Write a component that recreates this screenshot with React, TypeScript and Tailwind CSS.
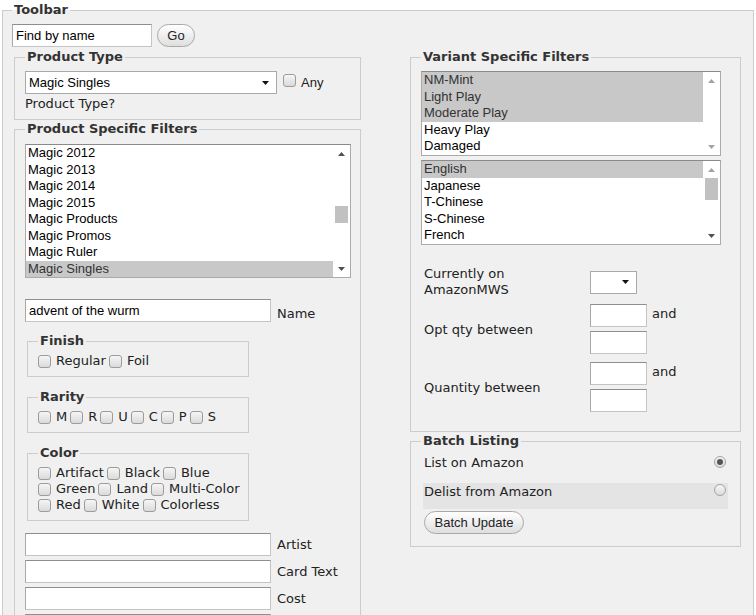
import React from "react";

const fieldsetCls = "border border-[#cccccc] min-w-0";
const legendCls = "px-[2px] font-bold leading-[18px] text-[#333]";
const inputCls =
  "block h-[23px] bg-white border border-[#c4c4c4] border-t-[#8e8e8e] border-l-[#a8a8a8] px-[3px] text-[13px] text-black font-['Liberation_Sans',Arial,sans-serif] outline-none";

function Tri({ up, dim }: { up?: boolean; dim?: boolean }) {
  return (
    <svg width="7" height="4" viewBox="0 0 7 4">
      <path d={up ? "M0 4L3.5 0L7 4Z" : "M0 0L3.5 4L7 0Z"} fill={dim ? "#a3a3a3" : "#505050"} />
    </svg>
  );
}

function Box() {
  return (
    <span className="inline-block w-[13px] h-[13px] shrink-0 rounded-[3px] border border-[#9c9c9c] bg-linear-to-b from-[#f6f6f6] to-[#dadada]" />
  );
}

function Radio({ checked }: { checked?: boolean }) {
  return (
    <span className="flex w-[12px] h-[12px] shrink-0 items-center justify-center rounded-full border border-[#a3a3a3] bg-linear-to-b from-[#f6f6f6] to-[#dcdcdc]">
      {checked ? <span className="w-[6px] h-[6px] rounded-full bg-[#555]" /> : null}
    </span>
  );
}

function Checks({ labels }: { labels: string[] }) {
  return (
    <div className="flex items-center h-[16px] leading-[16px] whitespace-nowrap">
      {labels.map((l, i) => (
        <span key={l} className={i === 0 ? "flex shrink-0 items-center" : "flex shrink-0 items-center ml-[3px]"}>
          <Box />
          <span className="ml-[5px]">{l}</span>
        </span>
      ))}
    </div>
  );
}

function FakeSelect({ className, value }: { className: string; value?: string }) {
  return (
    <div
      className={`flex items-center justify-between h-[23px] bg-white border border-[#a9a9a9] pl-[3px] pr-[7px] text-[13px] text-black font-['Liberation_Sans',Arial,sans-serif] ${className}`}
    >
      <span>{value}</span>
      <svg width="7" height="4" viewBox="0 0 7 4">
        <path d="M0 0L3.5 4L7 0Z" fill="#111" />
      </svg>
    </div>
  );
}

type ListProps = {
  items: string[];
  selected: number[];
  boxCls: string;
  rowCls: string;
  thumbCls?: string;
  upDim?: boolean;
  downDim?: boolean;
};

function ListBox({ items, selected, boxCls, rowCls, thumbCls, upDim, downDim }: ListProps) {
  return (
    <div
      className={`flex bg-white border border-[#ababab] border-t-[#8a8a8a] overflow-hidden text-[13px] font-['Liberation_Sans',Arial,sans-serif] ${boxCls}`}
    >
      <div className="flex-1 min-w-0">
        {items.map((it, i) => (
          <div
            key={it}
            className={`${rowCls} pl-[2px] ${selected.includes(i) ? "bg-[#c8c8c8] text-[#333]" : "text-black"}`}
          >
            {it}
          </div>
        ))}
      </div>
      <div className="flex w-[17px] shrink-0 flex-col bg-white">
        <div className="flex h-[17px] items-center justify-center">
          <Tri up dim={upDim} />
        </div>
        <div className="flex-1">{thumbCls ? <div className={`mx-[2px] bg-[#c1c1c1] ${thumbCls}`} /> : null}</div>
        <div className="flex h-[17px] items-center justify-center">
          <Tri dim={downDim} />
        </div>
      </div>
    </div>
  );
}

function LabeledInput({ label, top }: { label?: string; top: string }) {
  return (
    <div className={`flex items-center ${top}`}>
      <input className={`${inputCls} w-[246px]`} defaultValue="" />
      {label ? <span className="ml-[6px] leading-[16px]">{label}</span> : null}
    </div>
  );
}

const products = [
  "Magic 2012",
  "Magic 2013",
  "Magic 2014",
  "Magic 2015",
  "Magic Products",
  "Magic Promos",
  "Magic Ruler",
  "Magic Singles",
];
const conditions = ["NM-Mint", "Light Play", "Moderate Play", "Heavy Play", "Damaged"];
const languages = ["English", "Japanese", "T-Chinese", "S-Chinese", "French"];

export default function App() {
  return (
    <div className="min-h-[615px] bg-white text-[13px] text-[#222] font-['DejaVu_Sans',Verdana,sans-serif]">
      <fieldset className={`${fieldsetCls} mx-[2px] mt-[1px] bg-[#f0f0f0] px-[9px] pt-[5px] pb-[40px]`}>
        <legend className={legendCls}>Toolbar</legend>

        {/* search */}
        <div className="flex items-center">
          <input className={`${inputCls} w-[140px]`} defaultValue="Find by name" />
          <button className="ml-[5px] h-[23px] w-[38px] rounded-full border border-[#a9a9a9] bg-linear-to-b from-white to-[#dedede] text-[13px] text-[#222] font-['Liberation_Sans',Arial,sans-serif]">
            Go
          </button>
        </div>

        <div className="mt-[1px] flex items-start">
          {/* left column */}
          <div className="ml-[2px] w-[347px] shrink-0">
            <fieldset className={`${fieldsetCls} px-[10px] pt-[5px] pb-[7px]`}>
              <legend className={legendCls}>Product Type</legend>
              <div className="flex items-center">
                <FakeSelect className="w-[252px]" value="Magic Singles" />
                <span className="ml-[6px]">
                  <Box />
                </span>
                <span className="ml-[5px] font-['Liberation_Sans',Arial,sans-serif]">Any</span>
              </div>
              <div className="mt-[2px] leading-[16px]">Product Type?</div>
            </fieldset>

            <fieldset className={`${fieldsetCls} px-[10px] pt-[6px] pb-[10px]`}>
              <legend className={legendCls}>Product Specific Filters</legend>
              <ListBox
                items={products}
                selected={[7]}
                boxCls="w-[326px] h-[134px]"
                rowCls="h-[16.5px] leading-[16.5px]"
                thumbCls="mt-[44px] h-[17px]"
              />

              <div className="mt-[21px] flex items-end">
                <input className={`${inputCls} w-[246px]`} defaultValue="advent of the wurm" />
                <span className="ml-[6px] leading-[16px]">Name</span>
              </div>

              <fieldset className={`${fieldsetCls} ml-[2px] mt-[10px] w-[222px] px-[10px] pt-[3px] pb-[7px]`}>
                <legend className={legendCls}>Finish</legend>
                <Checks labels={["Regular", "Foil"]} />
              </fieldset>

              <fieldset className={`${fieldsetCls} ml-[2px] mt-[11px] w-[222px] px-[10px] pt-[3px] pb-[7px]`}>
                <legend className={legendCls}>Rarity</legend>
                <Checks labels={["M", "R", "U", "C", "P", "S"]} />
              </fieldset>

              <fieldset className={`${fieldsetCls} ml-[2px] mt-[11px] w-[222px] px-[10px] pt-[3px] pb-[7px]`}>
                <legend className={legendCls}>Color</legend>
                <Checks labels={["Artifact", "Black", "Blue"]} />
                <Checks labels={["Green", "Land", "Multi-Color"]} />
                <Checks labels={["Red", "White", "Colorless"]} />
              </fieldset>

              <LabeledInput label="Artist" top="mt-[12px]" />
              <LabeledInput label="Card Text" top="mt-[4px]" />
              <LabeledInput label="Cost" top="mt-[4px]" />
              <LabeledInput top="mt-[4px]" />
            </fieldset>
          </div>

          {/* right column */}
          <div className="ml-[49px] w-[331px] shrink-0">
            <fieldset className={`${fieldsetCls} px-[10px] pt-[5px] pb-[19px]`}>
              <legend className={legendCls}>Variant Specific Filters</legend>
              <ListBox
                items={conditions}
                selected={[0, 1, 2]}
                boxCls="w-[300px] h-[85px]"
                rowCls="h-[16.5px] leading-[16.5px]"
                upDim
                downDim
              />
              <ListBox
                items={languages}
                selected={[0]}
                boxCls="mt-[4px] w-[300px] h-[85px]"
                rowCls="h-[16.5px] leading-[16.5px]"
                thumbCls="h-[22px]"
                upDim
              />

              <div className="mt-[21px] grid grid-cols-[169px_auto] items-center gap-y-[6px] leading-[16px]">
                <div className="pl-[3px]">
                  Currently on
                  <br />
                  AmazonMWS
                </div>
                <div className="flex h-[32px] items-center">
                  <FakeSelect className="w-[47px]" />
                </div>

                <div className="pl-[3px] mt-[1px]">Opt qty between</div>
                <div className="flex items-start">
                  <div className="flex flex-col gap-[4px]">
                    <input className={`${inputCls} w-[57px]`} defaultValue="" />
                    <input className={`${inputCls} w-[57px]`} defaultValue="" />
                  </div>
                  <span className="ml-[5px] mt-[2px]">and</span>
                </div>

                <div className="pl-[3px] mt-[3px]">Quantity between</div>
                <div className="flex items-start mt-[2px]">
                  <div className="flex flex-col gap-[4px]">
                    <input className={`${inputCls} w-[57px]`} defaultValue="" />
                    <input className={`${inputCls} w-[57px]`} defaultValue="" />
                  </div>
                  <span className="ml-[5px] mt-[2px]">and</span>
                </div>
              </div>
            </fieldset>

            <fieldset className={`${fieldsetCls} px-[10px] pt-[4px] pb-[12px]`}>
              <legend className={legendCls}>Batch Listing</legend>
              <div className="ml-[2px] flex h-[26px] w-[305px] items-start justify-between pl-[1px] pr-[2px]">
                <span className="leading-[18px]">List on Amazon</span>
                <span className="mt-[2px]">
                  <Radio checked />
                </span>
              </div>
              <div className="ml-[2px] mt-[3px] flex h-[26px] w-[305px] items-start justify-between bg-[#e4e4e4] pl-[1px] pr-[2px]">
                <span className="leading-[18px]">Delist from Amazon</span>
                <span className="mt-[1px]">
                  <Radio />
                </span>
              </div>
              <button className="ml-[3px] mt-[2px] h-[23px] w-[100px] rounded-full border border-[#a9a9a9] bg-linear-to-b from-white to-[#dedede] text-[13px] text-[#222] font-['Liberation_Sans',Arial,sans-serif]">
                Batch Update
              </button>
            </fieldset>
          </div>
        </div>
      </fieldset>
    </div>
  );
}
